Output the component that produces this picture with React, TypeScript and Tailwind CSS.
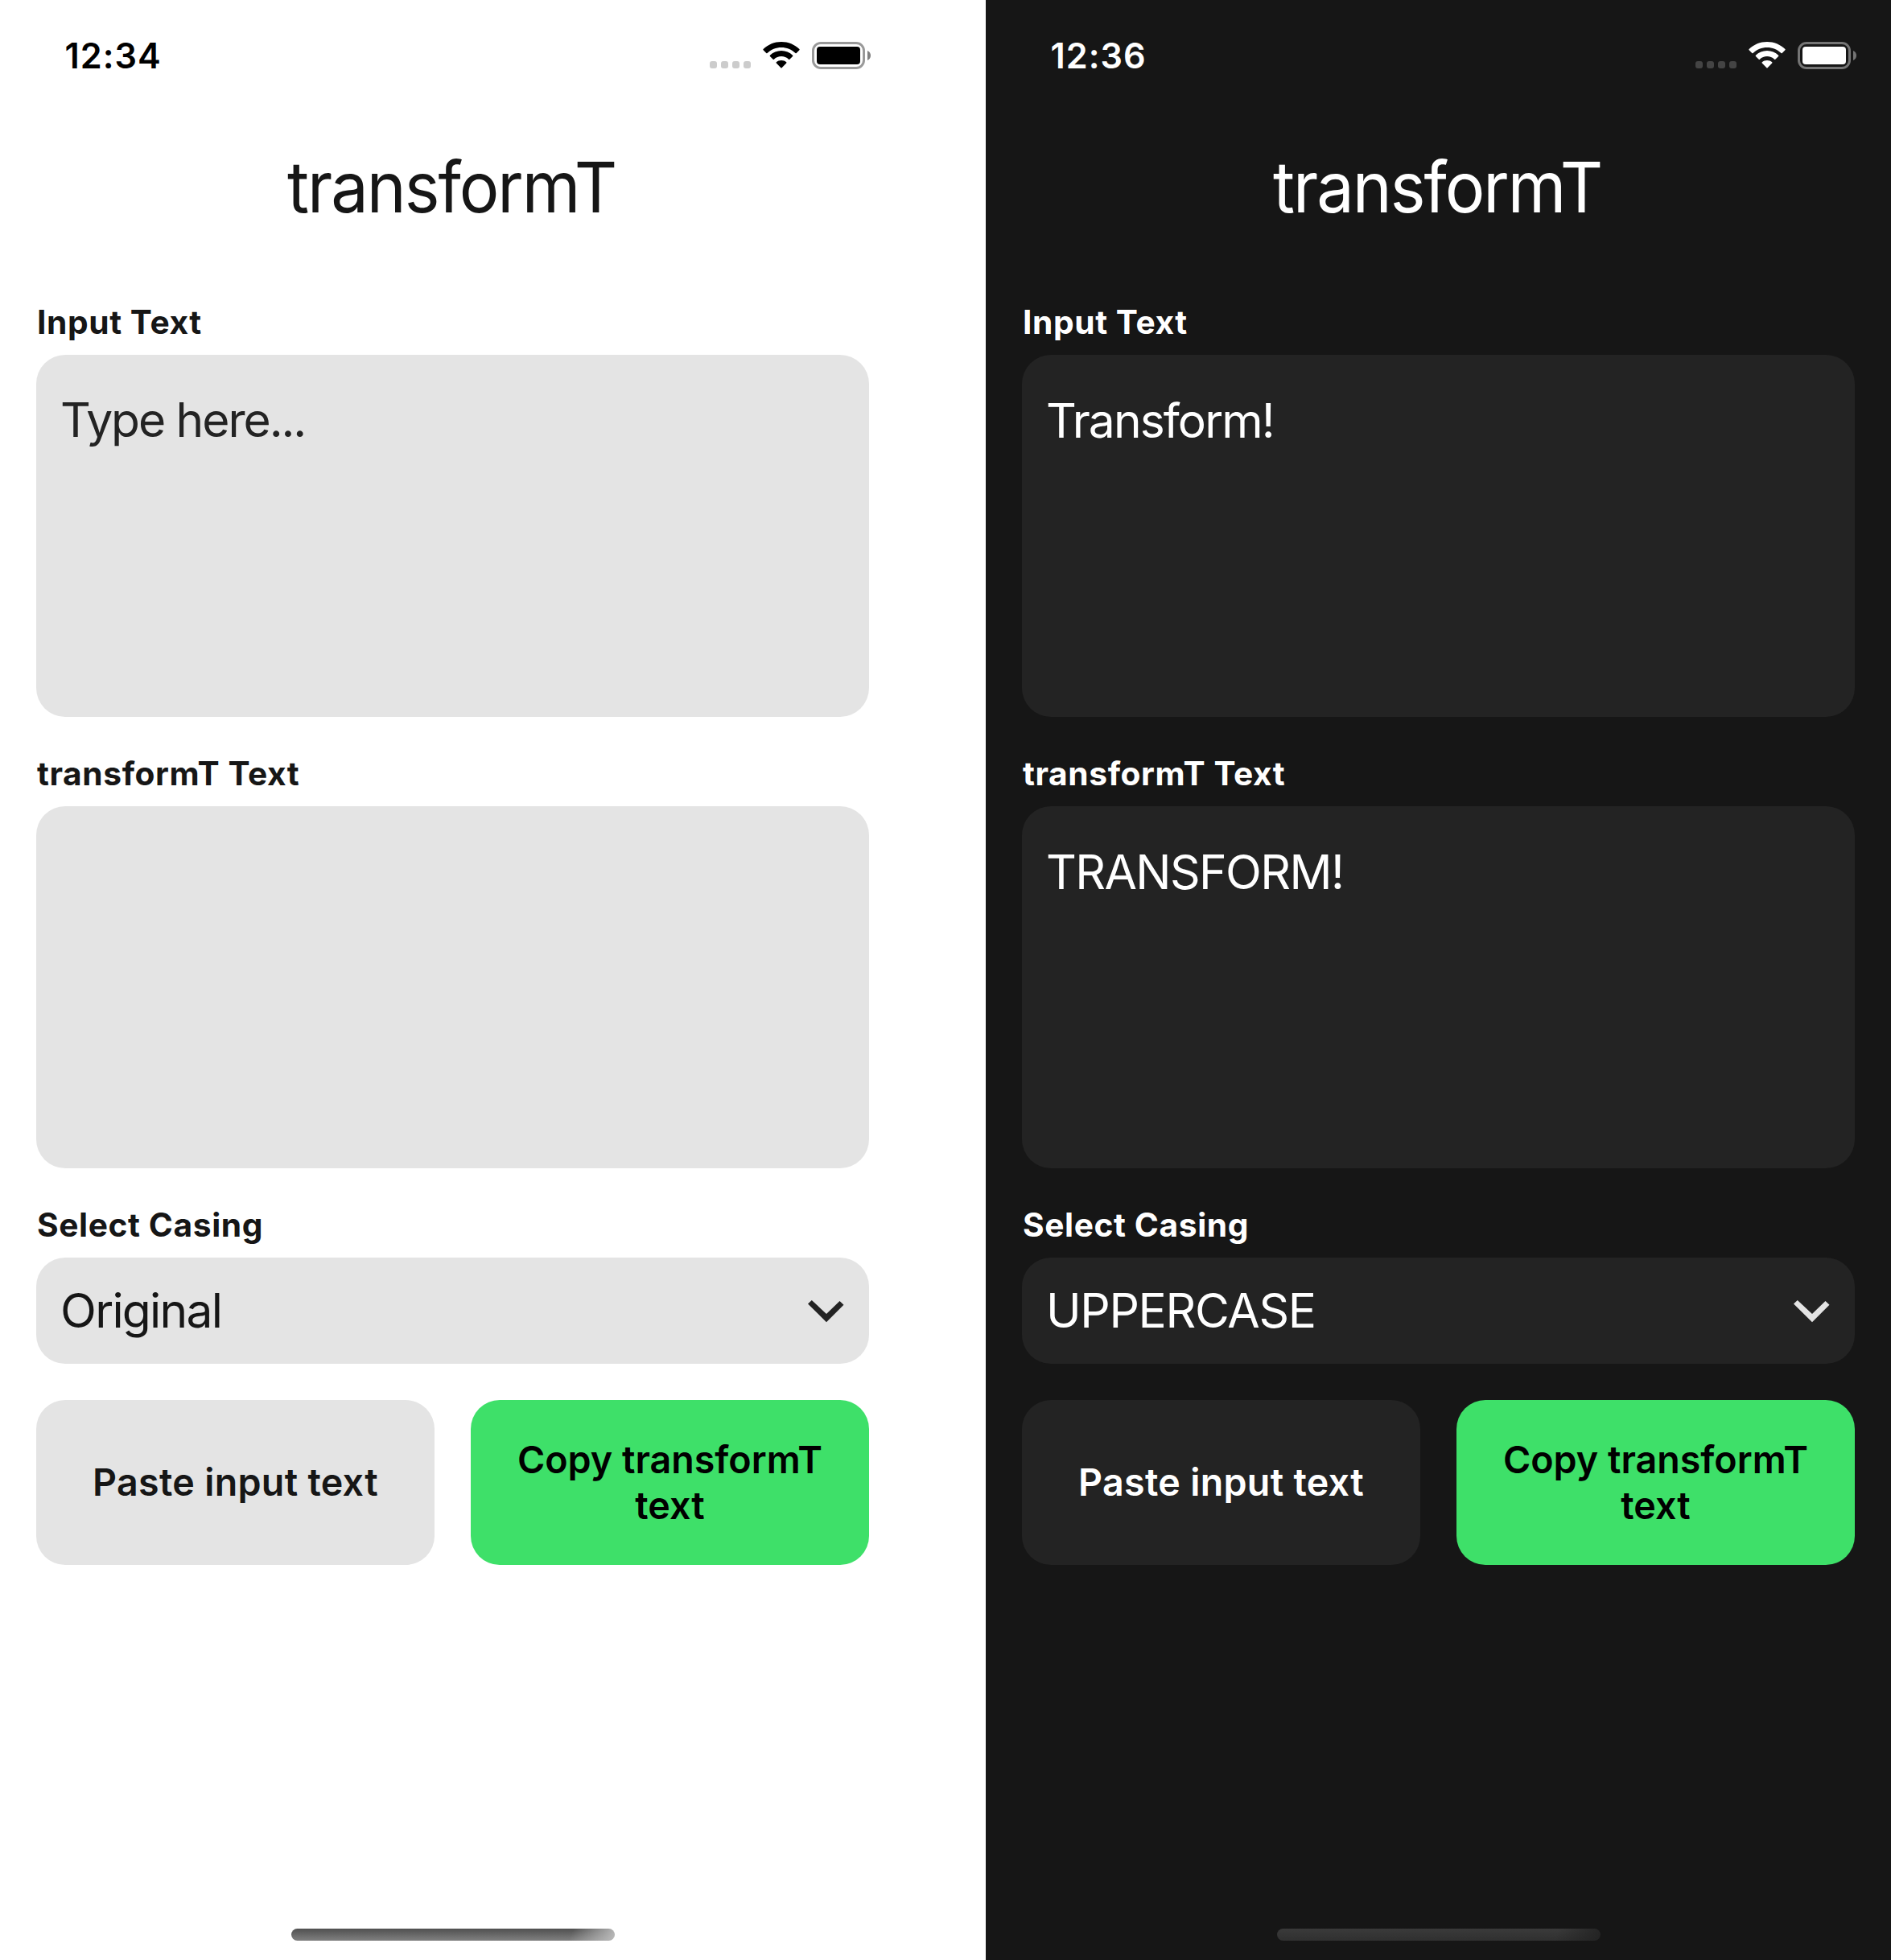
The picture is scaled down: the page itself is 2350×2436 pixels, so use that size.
import clsx from "clsx";

type ScreenProps = {
  dark?: boolean;
  time: string;
  input: string;
  inputClass: string;
  output: string;
  casing: string;
  casingClass: string;
};

function StatusIcons({ dark }: { dark?: boolean }) {
  const ink = dark ? "#ffffff" : "#000000";
  return (
    <svg width="202" height="36" viewBox="881 51 202 36" fill="none">
      {[882, 896, 910, 924].map((x) => (
        <rect key={x} x={x} y="76" width="9" height="9" rx="3" fill={dark ? "#444444" : "#cccccc"} />
      ))}
      <g fill={ink}>
        <path d="M971 52C962.500 52 954.500 55.300 948.600 61.100Q948 61.700 948.600 62.300L952.300 66Q952.900 66.600 953.500 66C958.200 61.500 964.400 59 971 59C977.600 59 983.800 61.500 988.500 66Q989.100 66.600 989.700 66L993.400 62.300Q994 61.700 993.400 61.100C987.500 55.300 979.500 52 971 52Z" />
        <path d="M971 63C965.600 63 960.600 65.100 956.900 68.700Q956.300 69.300 956.900 69.900L960.700 73.700Q961.300 74.300 961.900 73.700C964.400 71.400 967.600 70.100 971 70.100C974.400 70.100 977.600 71.400 980.100 73.700Q980.700 74.300 981.300 73.700L985.100 69.900Q985.700 69.300 985.100 68.700C981.400 65.100 976.400 63 971 63Z" />
        <path d="M971 75C968.500 75 966.500 75.800 964.800 77.200Q964.200 77.800 964.800 78.400L970.400 84.300Q971 84.900 971.600 84.300L977.200 78.400Q977.800 77.800 977.200 77.200C975.500 75.800 973.500 75 971 75Z" />
        <rect x="1015" y="58" width="54" height="22" rx="4" />
      </g>
      <rect x="1010.500" y="53.500" width="63" height="31" rx="9.500" stroke={dark ? "#757575" : "#999999"} strokeWidth="3" />
      <path d="M1078 63C1080.500 64 1082 66.300 1082 69C1082 71.700 1080.500 74 1078 75Z" fill={dark ? "#757575" : "#808080"} />
    </svg>
  );
}

function Label({ children }: { children: string }) {
  return (
    <h2 className="mt-[46px] mb-[15px] h-[50px] pl-px text-[40.7px] leading-[50px] font-bold tracking-[0.6px]">
      {children}
    </h2>
  );
}

function Screen({ dark, time, input, inputClass, output, casing, casingClass }: ScreenProps) {
  const field = dark ? "bg-[#232323]" : "bg-[#e4e4e4]";
  return (
    <section
      className={clsx(
        "flex h-[2436px] w-[1125px] flex-col",
        dark ? "bg-[#161616] text-white" : "bg-white text-[#161616]",
      )}
    >
      <header
        className={clsx(
          "flex h-[132px] items-start justify-between pt-[51px] pr-[42px] pl-[80.5px]",
          dark ? "text-white" : "text-black",
        )}
      >
        <span className="text-[43.2px] leading-[36px] font-semibold tracking-[1px]">{time}</span>
        <StatusIcons dark={dark} />
      </header>
      <h1 className="h-[198px] scale-x-95 pt-[2px] pr-[3px] text-center text-[87.2px] leading-[198px] tracking-[-2.1px]">
        transformT
      </h1>
      <main className="flex flex-1 flex-col px-[45px]">
        <Label>Input Text</Label>
        <div
          className={clsx(
            "h-[450px] rounded-[36px] px-[30px] text-[58.7px] leading-[72px]",
            field,
            inputClass,
            dark ? "pt-[46px]" : "pt-[45px] text-[#232323]",
          )}
        >
          {input}
        </div>
        <Label>transformT Text</Label>
        <div
          className={clsx(
            "h-[450px] rounded-[36px] px-[30px] pt-[46px] text-[58.7px] leading-[72px] tracking-[-1.6px]",
            field,
          )}
        >
          {output}
        </div>
        <Label>Select Casing</Label>
        <div
          className={clsx(
            "flex h-[132px] items-center justify-between rounded-[36px] pr-[31px] pl-[30px] text-[58.7px]",
            field,
          )}
        >
          <span className={casingClass}>{casing}</span>
          <svg className="mt-[2px]" width="45" height="28" viewBox="1004 1616 45 28" fill={dark ? "#e4e4e4" : "#232323"}>
            <path d="M1008.800 1616L1027 1633L1043.500 1617L1048.500 1621.700L1027 1643.200L1004 1620.500Z" />
          </svg>
        </div>
        <div className="mt-[45px] grid grid-cols-2 gap-[45px] text-[46.6px] leading-[57px] font-semibold">
          <button className={clsx("h-[205px] rounded-[36px] tracking-[0.3px]", field)}>Paste input text</button>
          <button className="h-[205px] rounded-[36px] bg-[#3ee069] text-black">
            Copy transformT
            <br />
            text
          </button>
        </div>
      </main>
      <footer className="flex h-[39px] justify-center">
        <div
          className={clsx(
            "h-[15px] w-[402px] rounded-full",
            dark
              ? "bg-[linear-gradient(110deg,transparent_86%,#232323_100%),linear-gradient(#3a3a3a,#303030)]"
              : "bg-[linear-gradient(110deg,transparent_86%,#bbbbbb_100%),linear-gradient(#505050,#808080)]",
          )}
        />
      </footer>
    </section>
  );
}

export default function App() {
  return (
    <div className="flex w-[2350px] justify-between bg-white font-['Inter',sans-serif]">
      <Screen
        time="12:34"
        input="Type here..."
        inputClass="tracking-[-2.05px]"
        output=""
        casing="Original"
        casingClass="tracking-[-1.75px]"
      />
      <Screen
        dark
        time="12:36"
        input="Transform!"
        inputClass="tracking-[-1.9px]"
        output="TRANSFORM!"
        casing="UPPERCASE"
        casingClass="tracking-[-1.35px]"
      />
    </div>
  );
}
